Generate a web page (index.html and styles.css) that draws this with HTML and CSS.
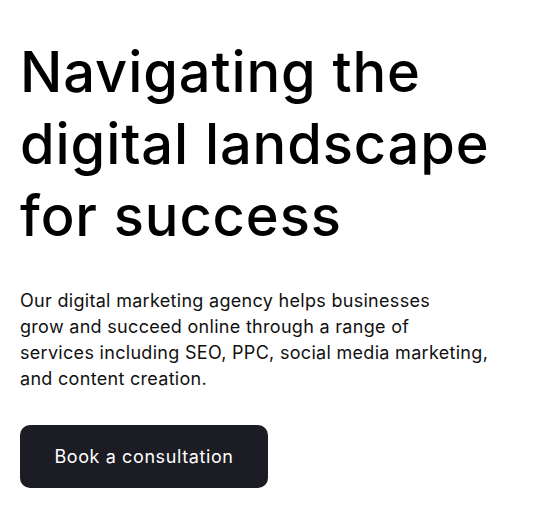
FILE: index.html
```html
<!DOCTYPE html>
<html lang="en">
<head>
<meta charset="utf-8">
<title>Digital marketing agency</title>
<link rel="stylesheet" href="styles.css">
</head>
<body>
<main class="hero">
  <h1 class="hero-title">Navigating the digital landscape for success</h1>
  <p class="hero-text">Our digital marketing agency helps businesses<br>grow and succeed online through a range of<br>services including SEO, PPC, social media marketing,<br>and content creation.</p>
  <a class="hero-button" href="#">Book a consultation</a>
</main>
</body>
</html>
```

FILE: styles.css
```css
html, body {
  margin: 0;
  padding: 0;
  background: #ffffff;
}

.hero {
  display: flex;
  flex-direction: column;
  align-items: flex-start;
  padding: 36px 20px 0 20px;
  font-family: "Inter", "Noto Sans", sans-serif;
  color: #000000;
}

.hero-title {
  margin: 0;
  font-size: 56px;
  font-weight: 500;
  line-height: 72px;
  letter-spacing: 0.9px;
  width: 504px;
}

.hero-text {
  margin: 36px 0 0 0;
  font-size: 18px;
  line-height: 26px;
  letter-spacing: 0.3px;
  white-space: nowrap;
  color: #111111;
}

.hero-button {
  margin-top: 33px;
  display: flex;
  align-items: center;
  justify-content: center;
  width: 248px;
  height: 63px;
  box-sizing: border-box;
  border-radius: 10px;
  background: #1c1c24;
  color: #ffffff;
  font-size: 18px;
  letter-spacing: 0.6px;
  text-decoration: none;
}
```
